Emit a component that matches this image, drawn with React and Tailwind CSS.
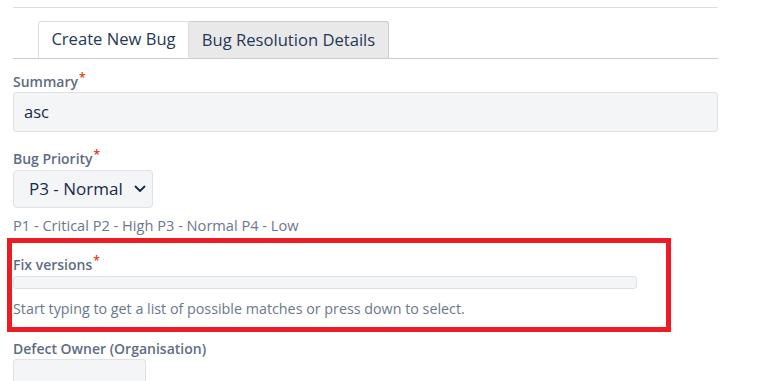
import React from 'react';

const Label = ({ children, required, className = '' }) => (
  <div className={`text-[14px] leading-[20px] font-semibold text-[#5e6c84] ${className}`}>
    {children}
    {required && <span className="text-[#de350b] text-[12px] align-top relative top-[-4px] ml-[1px]">*</span>}
  </div>
);

const App = () => {
  return (
    <div
      className="w-[777px] h-[381px] bg-white overflow-hidden"
      style={{ fontFamily: '"Open Sans", "Noto Sans", sans-serif' }}
    >
      <div className="ml-[13px] w-[705px]">
        {/* top rule */}
        <div className="mt-[7px] border-t border-[#dddddd]" />

        {/* tabs */}
        <div className="mt-[13px] flex pl-[25px] border-b border-[#cccccc]">
          <div className="w-[151px] h-[37px] -mb-px bg-white border border-[#dddddd] border-b-white rounded-t-[3px] flex items-center justify-center text-[16.6px] text-[#253858]">
            Create New Bug
          </div>
          <div className="w-[200px] h-[37px] bg-[#e9e9e9] border border-b-0 border-[#cccccc] border-l-0 rounded-tr-[3px] flex items-center justify-center text-[16.6px] text-[#253858]">
            Bug Resolution Details
          </div>
        </div>

        {/* summary */}
        <Label required className="mt-[13px]">Summary</Label>
        <div className="h-[40px] border border-[#dfe1e6] bg-[#f4f5f7] rounded-[3px] flex items-center pl-[10px] text-[16.5px] text-[#172b4d]">
          asc
        </div>

        {/* priority */}
        <Label required className="mt-[17px]">Bug Priority</Label>
        <div className="mt-px w-[140px] h-[38px] border border-[#dfe1e6] bg-[#f4f5f7] rounded-[4px] flex items-center justify-between pl-[15px] pr-[6px] text-[17px] text-[#172b4d]">
          <span>P3 - Normal</span>
          <svg width="12" height="8" viewBox="0 0 12 8" fill="none">
            <polyline points="1.5,1.5 6,6 10.5,1.5" stroke="#172b4d" strokeWidth="1.8" strokeLinecap="round" strokeLinejoin="round" />
          </svg>
        </div>
        <div className="mt-[7px] text-[14.6px] leading-[20px] text-[#6b778c]">
          P1 - Critical P2 - High P3 - Normal P4 - Low
        </div>

        {/* highlighted fix versions */}
        <div className="mt-[3px] -ml-[6px] w-[664px] border-[5px] border-[#ed1c24] pl-px pt-[12px] pb-[8px]">
          <Label required>Fix versions</Label>
          <div className="mt-px w-[624px] h-[13px] border border-[#dfe1e6] bg-[#f4f5f7] rounded-[3px]" />
          <div className="mt-[10px] text-[14.3px] leading-[20px] text-[#6b778c]">
            Start typing to get a list of possible matches or press down to select.
          </div>
        </div>

        {/* defect owner */}
        <Label className="mt-[7px]">Defect Owner (Organisation)</Label>
        <div className="w-[133px] h-[30px] border border-[#dfe1e6] bg-[#f4f5f7] rounded-[3px]" />
      </div>
    </div>
  );
};

export default App;
